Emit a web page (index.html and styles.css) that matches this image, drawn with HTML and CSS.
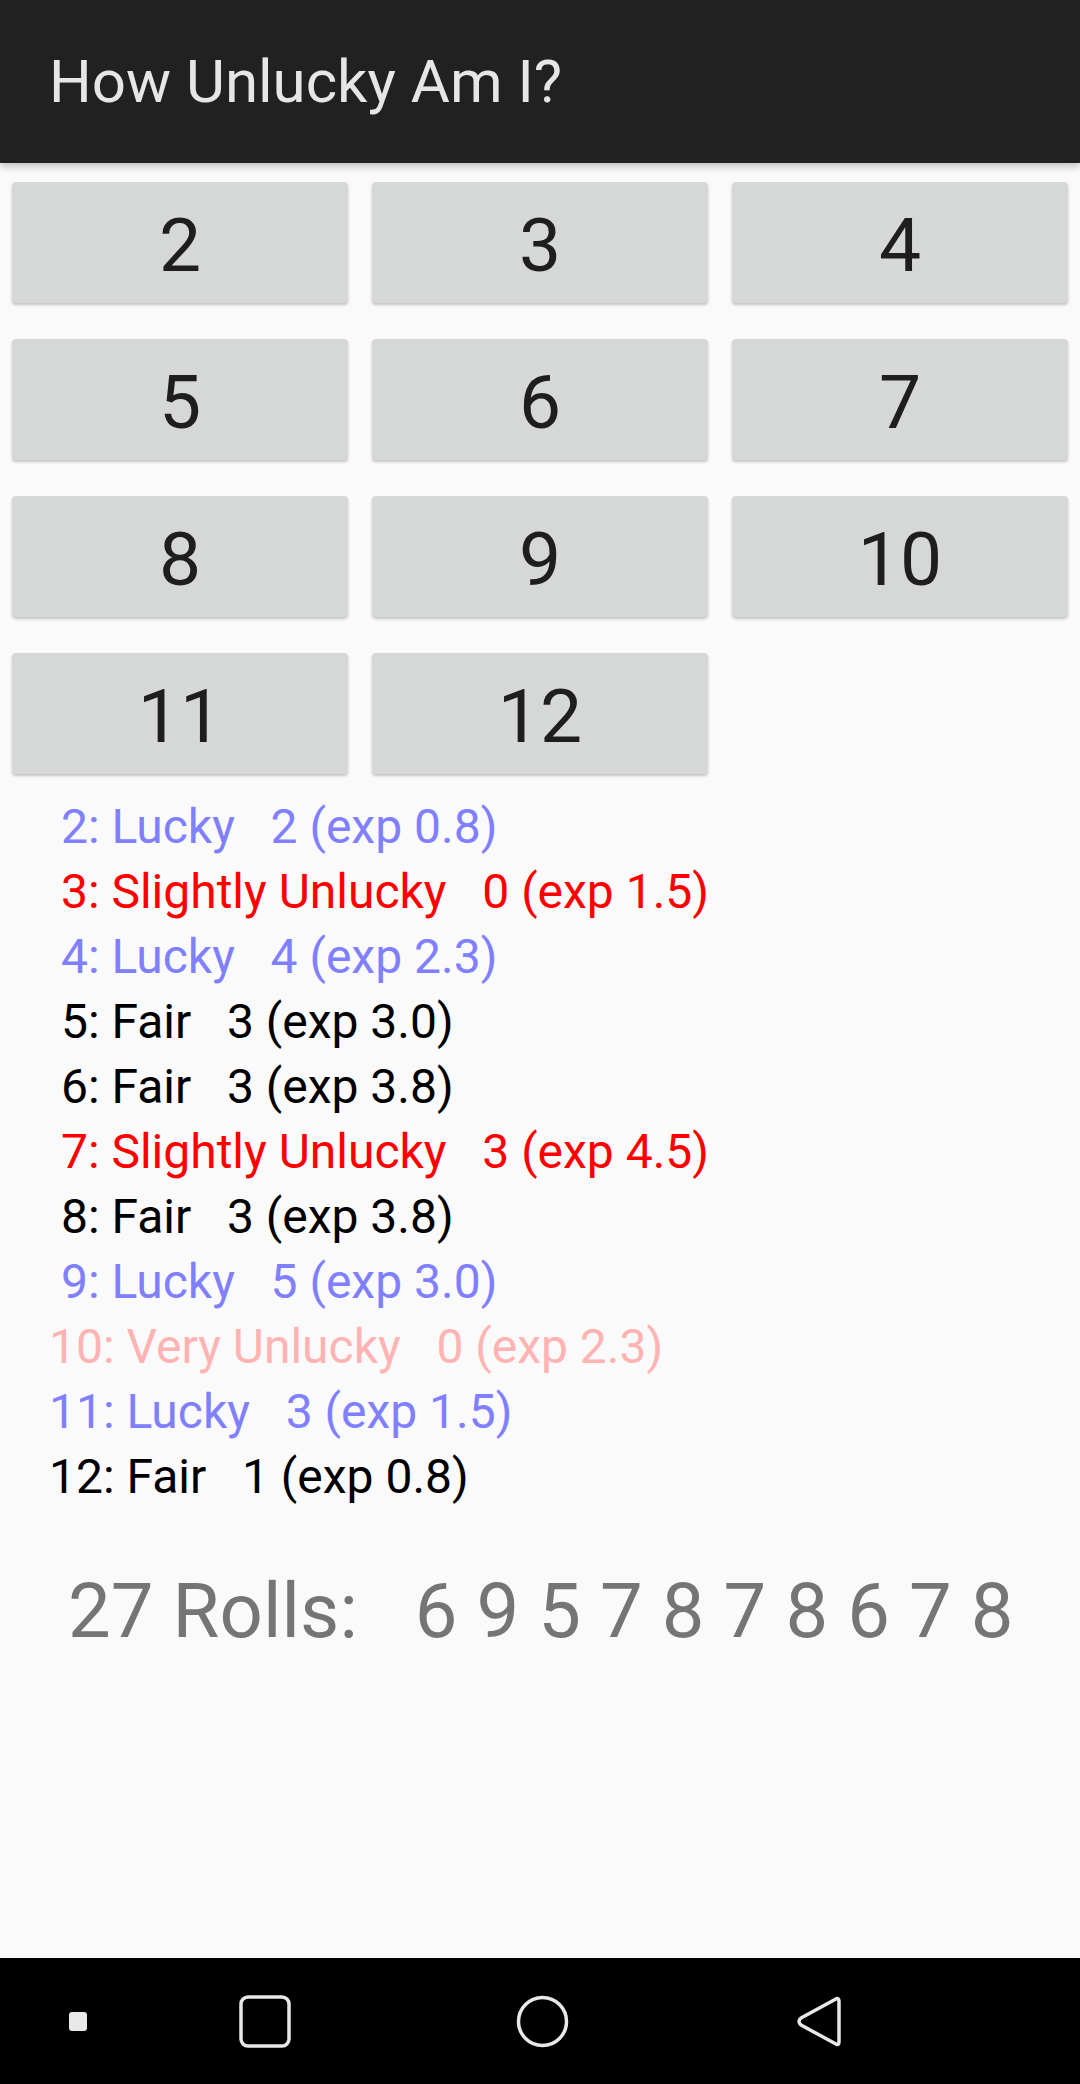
FILE: index.html
```html
<!DOCTYPE html>
<html>
<head>
<meta charset="utf-8">
<link rel="stylesheet" href="styles.css">
</head>
<body>
<div class="screen">
  <header class="toolbar"><span class="title">How Unlucky Am I?</span></header>
  <main class="content">
    <div class="grid">
      <button class="btn">2</button>
      <button class="btn">3</button>
      <button class="btn">4</button>
      <button class="btn">5</button>
      <button class="btn">6</button>
      <button class="btn">7</button>
      <button class="btn">8</button>
      <button class="btn">9</button>
      <button class="btn">10</button>
      <button class="btn">11</button>
      <button class="btn">12</button>
    </div>
    <div class="list">
      <div class="row lucky"> 2: Lucky   2 (exp 0.8)</div>
      <div class="row slight"> 3: Slightly Unlucky   0 (exp 1.5)</div>
      <div class="row lucky"> 4: Lucky   4 (exp 2.3)</div>
      <div class="row fair"> 5: Fair   3 (exp 3.0)</div>
      <div class="row fair"> 6: Fair   3 (exp 3.8)</div>
      <div class="row slight"> 7: Slightly Unlucky   3 (exp 4.5)</div>
      <div class="row fair"> 8: Fair   3 (exp 3.8)</div>
      <div class="row lucky"> 9: Lucky   5 (exp 3.0)</div>
      <div class="row very">10: Very Unlucky   0 (exp 2.3)</div>
      <div class="row lucky">11: Lucky   3 (exp 1.5)</div>
      <div class="row fair">12: Fair   1 (exp 0.8)</div>
    </div>
    <div class="rolls">27 Rolls:   6 9 5 7 8 7 8 6 7 8</div>
  </main>
  <nav class="navbar">
    <span class="nav-dot"></span>
    <svg class="nav-recent" width="52" height="53" viewBox="0 0 52 53"><rect x="2" y="2" width="48" height="49" rx="7" fill="none" stroke="#e8e8e8" stroke-width="3.5"/></svg>
    <svg class="nav-home" width="53" height="53" viewBox="0 0 53 53"><circle cx="26.5" cy="26.5" r="24" fill="none" stroke="#e8e8e8" stroke-width="3.5"/></svg>
    <svg class="nav-back" width="50" height="53" viewBox="0 0 50 53"><path d="M44 6 Q44 2 40 4.5 L6 23 Q2 26.5 6 30 L40 48.5 Q44 51 44 47 Z" fill="none" stroke="#e8e8e8" stroke-width="3.5" stroke-linejoin="round"/></svg>
  </nav>
</div>
</body>
</html>
```
FILE: styles.css
```css
* { box-sizing: border-box; }
html, body { margin: 0; padding: 0; }
body {
  background: #fafafa;
  font-family: Roboto, "Noto Sans", sans-serif;
  width: 1080px;
  height: 2084px;
  overflow: hidden;
}
.screen {
  display: flex;
  flex-direction: column;
  height: 2084px;
}
.toolbar {
  height: 163px;
  flex: none;
  background: #212121;
  display: flex;
  align-items: center;
  padding-left: 49px;
  box-shadow: 0 3px 8px rgba(0,0,0,0.25);
  position: relative;
  z-index: 1;
}
.title {
  color: #e6e6e6;
  font-size: 60px;
  line-height: 1;
}
.content {
  flex: 1;
  display: flex;
  flex-direction: column;
}
.grid {
  display: grid;
  grid-template-columns: repeat(3, 336px);
  grid-auto-rows: 121px;
  column-gap: 24px;
  row-gap: 36px;
  padding: 19px 12px 0 12px;
}
.btn {
  border: none;
  background: #d6d7d7;
  border-radius: 4px;
  box-shadow: 0 2px 3px rgba(0,0,0,0.22);
  font-family: Roboto, "Noto Sans", sans-serif;
  font-size: 75px;
  color: #1e1e1e;
  padding: 5px 0 0 0;
  margin: 0;
  line-height: 1;
}
.list {
  padding: 20px 0 0 49px;
}
.row {
  white-space: pre;
  font-size: 48px;
  line-height: 65px;
  height: 65px;
}
.lucky { color: #8080ff; }
.slight { color: #ff0000; }
.fair { color: #000000; }
.very { color: #ffb3b3; }
.rolls {
  white-space: pre;
  color: #757575;
  font-size: 76px;
  letter-spacing: 0.1px;
  line-height: 1;
  padding: 64px 0 0 68px;
}
.navbar {
  flex: none;
  height: 126px;
  background: #000;
  display: flex;
  align-items: center;
  padding-left: 69px;
}
.nav-dot {
  width: 18px;
  height: 19px;
  background: #e8e8e8;
  border-radius: 3px;
}
.nav-recent { margin-left: 152px; }
.nav-home { margin-left: 225px; }
.nav-back { margin-left: 226px; }
```
